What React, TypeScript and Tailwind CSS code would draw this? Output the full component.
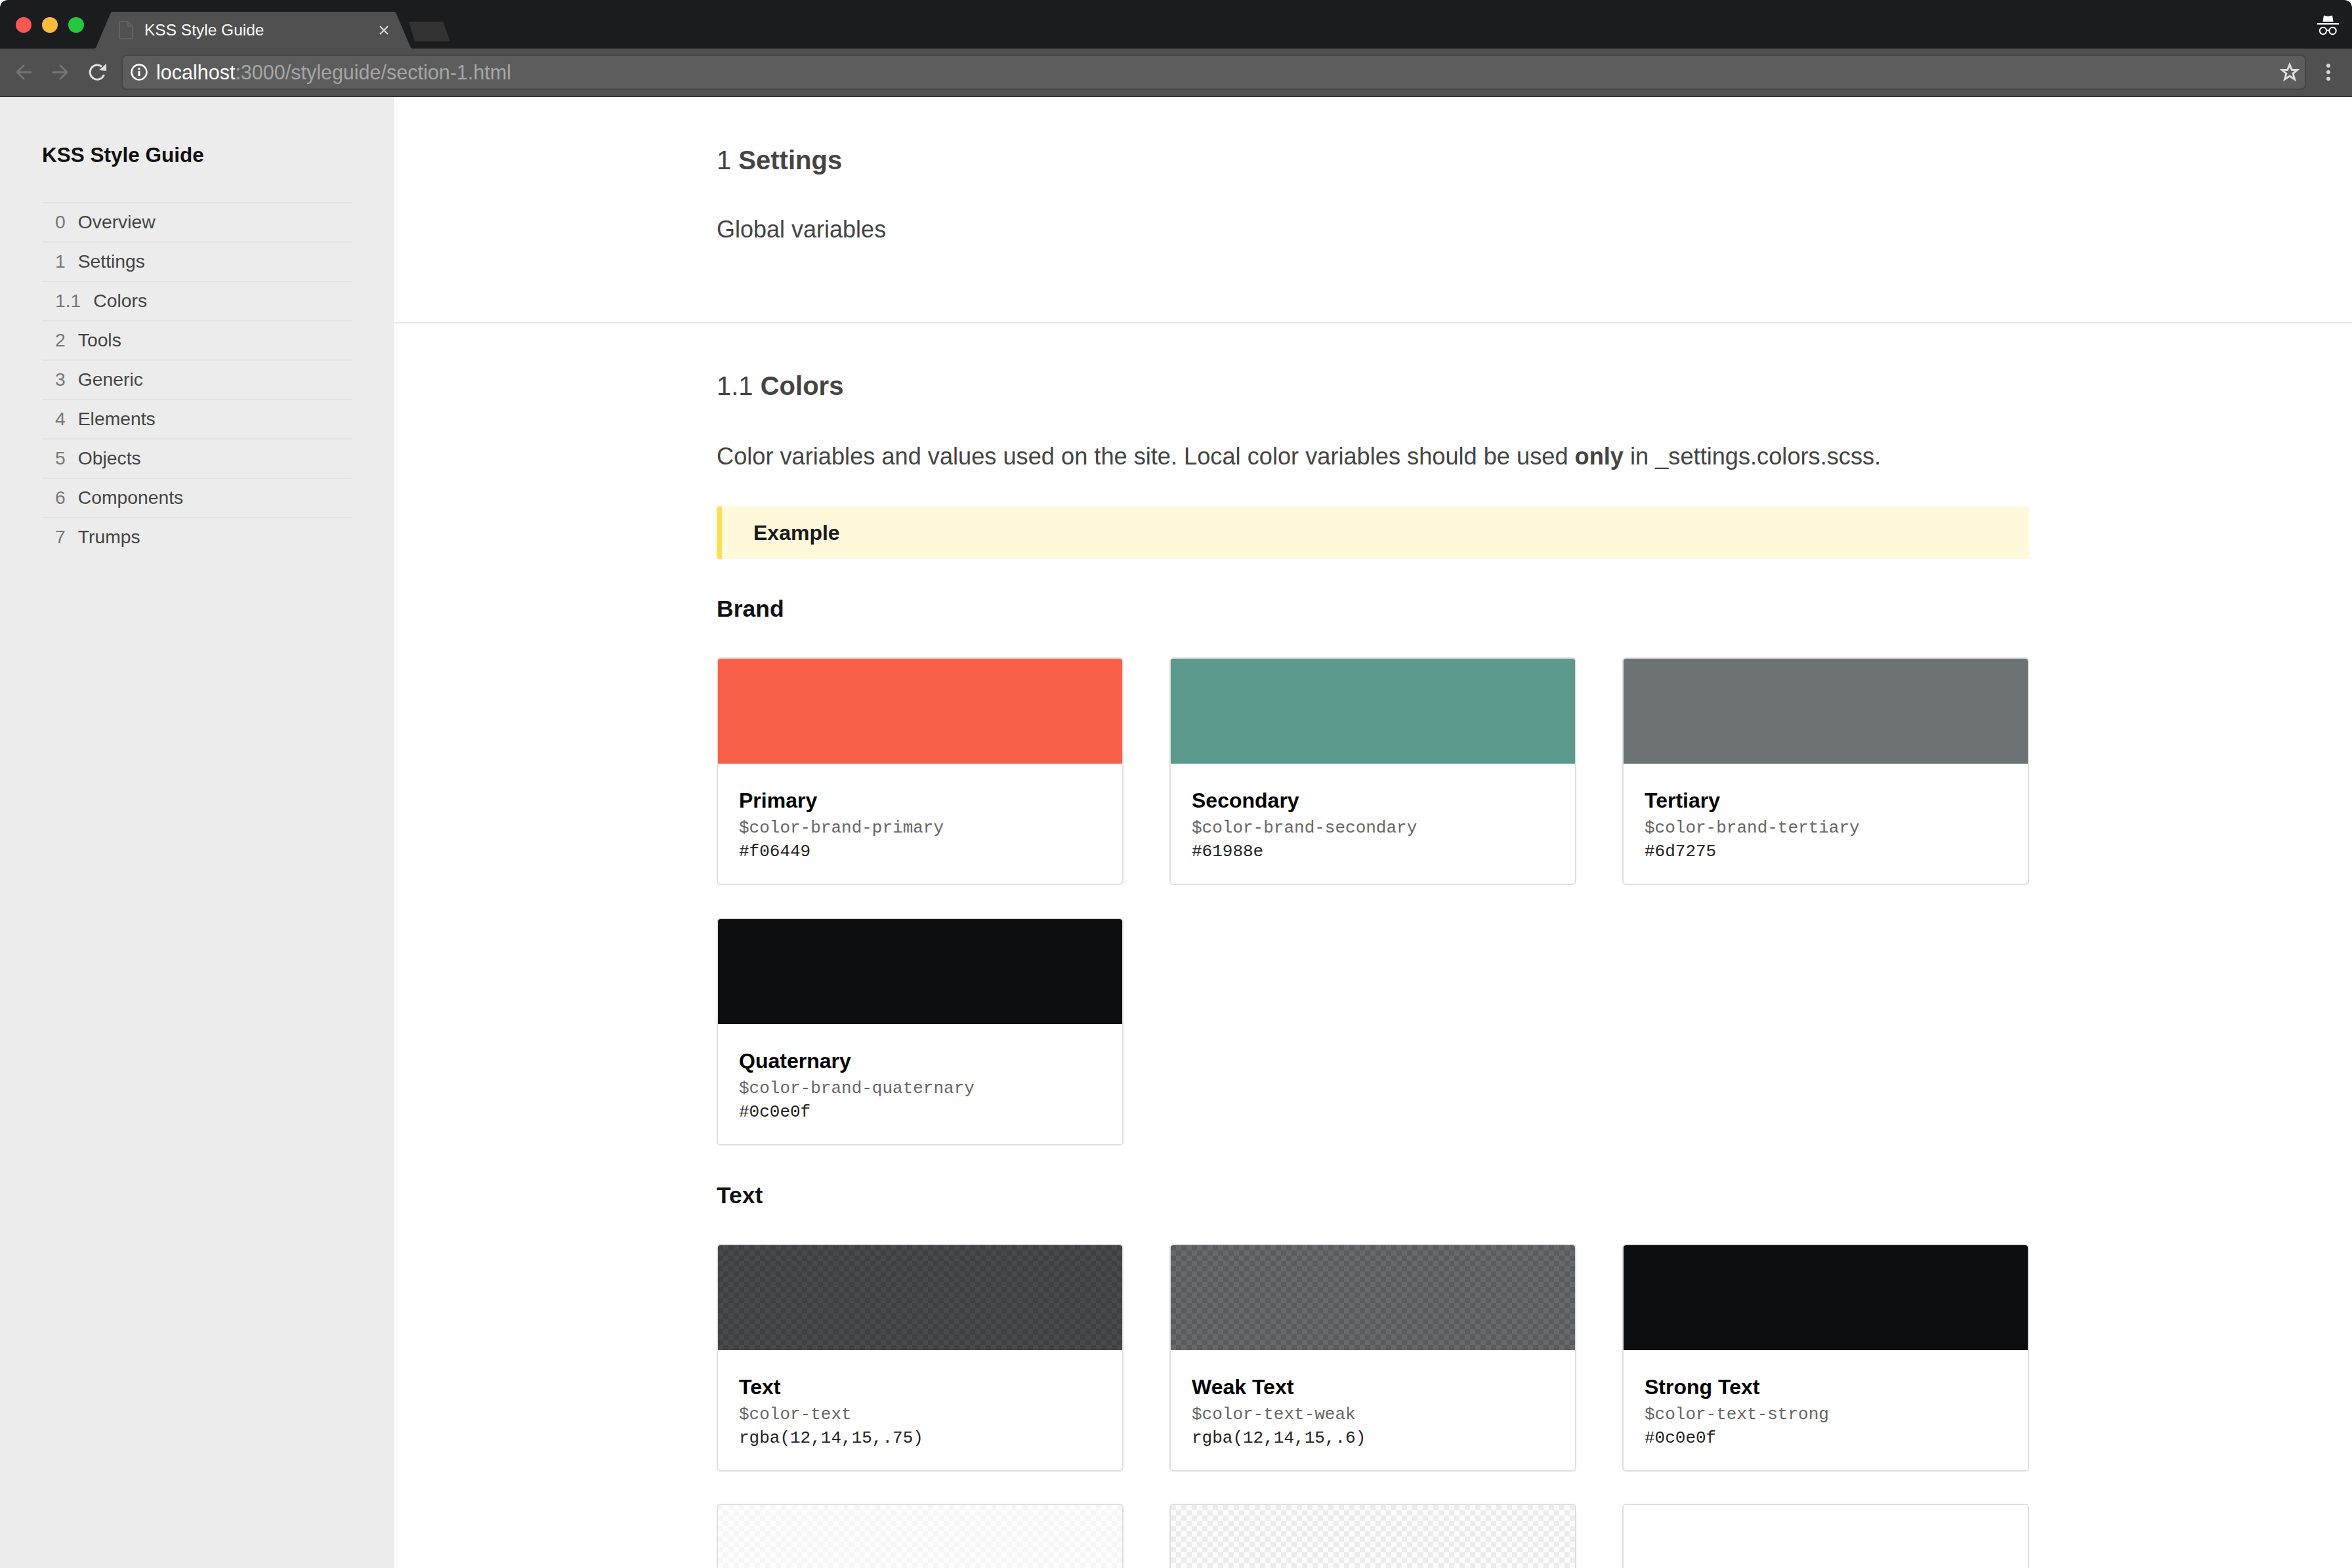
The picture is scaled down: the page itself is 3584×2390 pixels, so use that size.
const navItems = [
  { num: "0", label: "Overview" },
  { num: "1", label: "Settings" },
  { num: "1.1", label: "Colors" },
  { num: "2", label: "Tools" },
  { num: "3", label: "Generic" },
  { num: "4", label: "Elements" },
  { num: "5", label: "Objects" },
  { num: "6", label: "Components" },
  { num: "7", label: "Trumps" },
];

interface SwatchProps {
  swatch: string;
  name?: string;
  variable?: string;
  value?: string;
}

const brandColors: SwatchProps[] = [
  { swatch: "bg-[#f8604a]", name: "Primary", variable: "$color-brand-primary", value: "#f06449" },
  { swatch: "bg-[#5b998c]", name: "Secondary", variable: "$color-brand-secondary", value: "#61988e" },
  { swatch: "bg-[#6d7275]", name: "Tertiary", variable: "$color-brand-tertiary", value: "#6d7275" },
  { swatch: "bg-[#0c0e0f]", name: "Quaternary", variable: "$color-brand-quaternary", value: "#0c0e0f" },
];

const textColors: SwatchProps[] = [
  {
    swatch: "bg-[conic-gradient(#48494b_25%,#3f4041_0_50%,#48494b_0_75%,#3f4041_0)] bg-[length:16px_16px]",
    name: "Text",
    variable: "$color-text",
    value: "rgba(12,14,15,.75)",
  },
  {
    swatch: "bg-[conic-gradient(#68696b_25%,#5a5b5d_0_50%,#68696b_0_75%,#5a5b5d_0)] bg-[length:16px_16px]",
    name: "Weak Text",
    variable: "$color-text-weak",
    value: "rgba(12,14,15,.6)",
  },
  { swatch: "bg-[#0c0e0f]", name: "Strong Text", variable: "$color-text-strong", value: "#0c0e0f" },
  { swatch: "bg-[conic-gradient(#fdfdfd_25%,#f6f6f7_0_50%,#fdfdfd_0_75%,#f6f6f7_0)] bg-[length:16px_16px]" },
  { swatch: "bg-[conic-gradient(#fcfcfc_25%,#ececec_0_50%,#fcfcfc_0_75%,#ececec_0)] bg-[length:16px_16px]" },
  { swatch: "bg-white" },
];

const SwatchCard = ({ swatch, name, variable, value }: SwatchProps) => {
  return (
    <div className="h-[347px] overflow-hidden rounded-[6px] border-2 border-[#dedede] bg-white">
      <div className={`h-[160px] ${swatch}`} />
      {name && (
        <div className="px-[32px] pt-[38px]">
          <div className="text-[32px] leading-[36px] font-bold text-black">{name}</div>
          <div className="mt-[6px] font-['Liberation_Mono',monospace] text-[26px] leading-[36px] text-[#666]">
            {variable}
          </div>
          <div className="font-['Liberation_Mono',monospace] text-[26px] leading-[36px] text-[#222]">{value}</div>
        </div>
      )}
    </div>
  );
};

const TitleBar = () => {
  return (
    <div className="flex h-[74px] items-start rounded-t-[12px] bg-[#1b1c1e] pr-[20px] pl-[24px]">
      <div className="mt-[26px] flex gap-[16px]">
        <div className="h-[24px] w-[24px] rounded-full bg-[#fc5753]" />
        <div className="h-[24px] w-[24px] rounded-full bg-[#fdbc40]" />
        <div className="h-[24px] w-[24px] rounded-full bg-[#25c73f]" />
      </div>
      <div className="mt-[18px] ml-[16px] flex h-[56px] w-[484px] items-center bg-[#505050] pr-[36px] pl-[37px] [clip-path:polygon(0_100%,2px_98%,25px_1px,27px_0,457px_0,459px_1px,482px_98%,484px_100%)]">
        <svg width="22" height="28" viewBox="0 0 22 28" fill="none" stroke="#616161" strokeWidth="2">
          <path d="M1 1h13l7 7v19H1z" />
          <path d="M14 1v7h7" />
        </svg>
        <span className="ml-[17px] text-[24.500px] leading-[30px] text-white">KSS Style Guide</span>
        <svg className="ml-auto" width="14" height="14" viewBox="0 0 14 14" stroke="#e2e2e2" strokeWidth="2">
          <path d="M1 1l12 12M13 1L1 13" />
        </svg>
      </div>
      <div className="mt-[33px] -ml-[5px] h-[30px] w-[63px] rounded-[3px] bg-[#333] [clip-path:polygon(0_0,52px_0,100%_100%,9px_100%)]" />
      <svg className="mt-[22px] ml-auto" width="33" height="32" viewBox="0 0 33 32" fill="none">
        <path d="M10 1.500l6.500 1.500 6.500-1.500 1.500 9.500H8.500z" fill="#fff" />
        <rect x="0" y="13" width="33" height="2.500" fill="#fff" />
        <circle cx="9" cy="25" r="5.200" stroke="#fff" strokeWidth="2" />
        <circle cx="23.500" cy="25" r="5.200" stroke="#fff" strokeWidth="2" />
        <path d="M14 24.500c1.500-.8 3-.8 4.500 0" stroke="#fff" strokeWidth="1.500" />
      </svg>
    </div>
  );
};

const ToolBar = () => {
  return (
    <div className="flex h-[74px] items-center border-b-2 border-[#363636] bg-[#505050] pr-[33px] pl-[23px]">
      <svg width="26" height="26" viewBox="0 0 26 26" fill="none" stroke="#757575" strokeWidth="3" strokeLinecap="round" strokeLinejoin="round">
        <path d="M24 13H3M13 3L3 13l10 10" />
      </svg>
      <svg className="ml-[30px]" width="26" height="26" viewBox="0 0 26 26" fill="none" stroke="#757575" strokeWidth="3" strokeLinecap="round" strokeLinejoin="round">
        <path d="M2 13h21M13 3l10 10-10 10" />
      </svg>
      <svg className="ml-[30px]" width="28" height="28" viewBox="0 0 28 28" fill="none">
        <path d="M23.500 18A11 11 0 1 1 20 5.500" stroke="#dedede" strokeWidth="3" />
        <path d="M16 11L27 12V1z" fill="#dedede" />
      </svg>
      <div className="ml-[22px] flex h-[54px] flex-1 items-center rounded-[8px] border-2 border-[#454545] bg-[#5d5d5d] pr-[8px] pl-[12px]">
        <svg width="26" height="26" viewBox="0 0 26 26" fill="none">
          <circle cx="13" cy="13" r="11.500" stroke="#fff" strokeWidth="2.500" />
          <rect x="11.500" y="11" width="3" height="8" fill="#fff" />
          <rect x="11.500" y="6.500" width="3" height="3" fill="#fff" />
        </svg>
        <div className="ml-[13px] text-[30.500px] leading-[36px] text-[#a6a6a6]">
          <span className="text-white">localhost</span>:3000/styleguide/section-1.html
        </div>
        <svg className="ml-auto" width="30" height="30" viewBox="0 0 30 30" fill="none">
          <path d="M15 3.500l3.400 8h8.400l-6.700 5.600 2.400 8.700L15 21l-7.500 4.800 2.400-8.700-6.700-5.600h8.400z" stroke="#dcdcdc" strokeWidth="3" strokeLinejoin="miter" />
        </svg>
      </div>
      <div className="ml-[31px] flex flex-col gap-[4px]">
        <div className="h-[6px] w-[6px] rounded-full bg-[#d6d6d6]" />
        <div className="h-[6px] w-[6px] rounded-full bg-[#d6d6d6]" />
        <div className="h-[6px] w-[6px] rounded-full bg-[#d6d6d6]" />
      </div>
    </div>
  );
};

const Sidebar = () => {
  return (
    <div className="w-[600px] shrink-0 bg-[#ececec] px-[64px] pt-[66px]">
      <div className="text-[31.500px] leading-[44px] font-bold text-[#111]">KSS Style Guide</div>
      <div className="mt-[50px]">
        {navItems.map((item) => (
          <div key={item.num} className="flex h-[60px] items-center gap-[19px] border-t-2 border-[#e3e3e3] pb-[2px] pl-[20px] text-[28.300px]">
            <span className="text-[#777]">{item.num}</span>
            <span className="text-[#444]">{item.label}</span>
          </div>
        ))}
      </div>
    </div>
  );
};

export default function App() {
  return (
    <div className="h-[2390px] w-[3584px] overflow-hidden bg-white font-['Liberation_Sans',sans-serif]">
      <TitleBar />
      <ToolBar />
      <div className="flex">
        <Sidebar />
        <div className="flex-1 text-[#444]">
          <div className="h-[345px] border-b-2 border-[#e6e6e6] pt-[72px] pl-[492px]">
            <h1 className="text-[40px] leading-[48px]">
              1 <span className="font-bold">Settings</span>
            </h1>
            <p className="mt-[58px] text-[36px] leading-[48px]">Global variables</p>
          </div>
          <div className="w-[2492px] pt-[71px] pl-[492px]">
            <h2 className="text-[40px] leading-[48px]">
              1.1 <span className="font-bold">Colors</span>
            </h2>
            <p className="mt-[60px] text-[36.200px] leading-[48px]">
              Color variables and values used on the site. Local color variables should be used <b>only</b> in _settings.colors.scss.
            </p>
            <div className="mt-[52px] flex h-[80px] items-center rounded-[4px] border-l-[8px] border-[#ffdd57] bg-[#fff9dc] pl-[48px] text-[32px] font-bold text-[#1a1a1a]">
              Example
            </div>
            <h3 className="mt-[52px] text-[35.500px] leading-[48px] font-bold text-[#111]">Brand</h3>
            <div className="mt-[50px] grid grid-cols-3 gap-x-[70px] gap-y-[50px]">
              {brandColors.map((color) => (
                <SwatchCard key={color.name} {...color} />
              ))}
            </div>
            <h3 className="mt-[52px] text-[35.500px] leading-[48px] font-bold text-[#111]">Text</h3>
            <div className="mt-[50px] grid grid-cols-3 gap-x-[70px] gap-y-[49px]">
              {textColors.map((color) => (
                <SwatchCard key={color.swatch} {...color} />
              ))}
            </div>
          </div>
        </div>
      </div>
    </div>
  );
}
